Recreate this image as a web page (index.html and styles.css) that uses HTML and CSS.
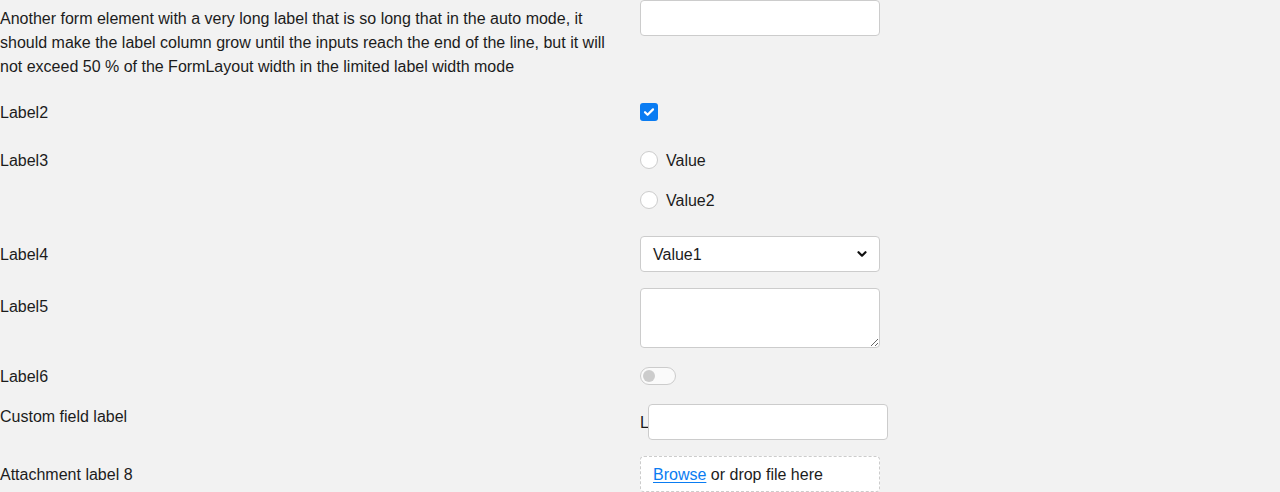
FILE: index.html
```html
<!DOCTYPE html>
<html>
<head>
<meta charset="utf-8">
<link rel="stylesheet" href="styles.css">
</head>
<body>
<div class="form">
  <div class="row r1">
    <div class="lbl">Another form element with a very long label that is so long that in the auto mode, it should make the label column grow until the inputs reach the end of the line, but it will not exceed 50 % of the FormLayout width in the limited label width mode</div>
    <div class="ctl"><div class="input"></div></div>
  </div>
  <div class="row r2">
    <div class="lbl">Label2</div>
    <div class="ctl"><div class="check"><svg width="18" height="18" viewBox="0 0 18 18"><path d="M5 9.2l2.6 2.6L13 6.4" fill="none" stroke="#fff" stroke-width="2.2" stroke-linecap="round" stroke-linejoin="round"/></svg></div></div>
  </div>
  <div class="row r3">
    <div class="lbl">Label3</div>
    <div class="ctl radios">
      <div class="radio"><span class="dot"></span><span class="txt">Value</span></div>
      <div class="radio"><span class="dot"></span><span class="txt">Value2</span></div>
    </div>
  </div>
  <div class="row r4">
    <div class="lbl">Label4</div>
    <div class="ctl"><div class="select"><span class="txt">Value1</span><svg width="12" height="12" viewBox="0 0 12 12"><path d="M2.5 4.2L6 7.7l3.5-3.5" fill="none" stroke="#111" stroke-width="2.2" stroke-linecap="round" stroke-linejoin="round"/></svg></div></div>
  </div>
  <div class="row r5">
    <div class="lbl">Label5</div>
    <div class="ctl"><textarea class="area"></textarea></div>
  </div>
  <div class="row r6">
    <div class="lbl">Label6</div>
    <div class="ctl"><div class="toggle"><span class="knob"></span></div></div>
  </div>
  <div class="row r7">
    <div class="lbl top">Custom field label</div>
    <div class="ctl custom"><span class="prefix txt">L</span><div class="input"></div></div>
  </div>
  <div class="row r8">
    <div class="lbl">Attachment label 8</div>
    <div class="ctl"><div class="upload"><span class="txt"><a class="browse">Browse</a> or drop file here</span></div></div>
  </div>
</div>
</body>
</html>
```
FILE: styles.css
```css
* { box-sizing: border-box; }
html, body { margin: 0; padding: 0; }
body {
  background: #f2f2f2;
  font-family: "Liberation Sans", Arial, sans-serif;
  font-size: 16px;
  line-height: 24px;
  color: #1c1c1c;
  width: 1280px;
  height: 492px;
  overflow: hidden;
}
.form { display: flex; flex-direction: column; }
.row {
  display: grid;
  grid-template-columns: 640px 1fr;
  align-items: start;
}
.r2 { margin-top: 15px; }
.r3 { margin-top: 17px; }
.r4 { margin-top: 24px; }
.r5 { margin-top: 16px; }
.r6 { margin-top: 10px; }
.r7 { margin-top: 15px; }
.r8 { margin-top: 16px; }
.lbl { padding: 7px 20px 0 0; }
.lbl.top { padding-top: 1px; }
.txt { padding-top: 2px; }
.ctl { display: flex; flex-direction: column; align-items: flex-start; }
.input {
  width: 240px;
  height: 36px;
  background: #fff;
  border: 1px solid #cccccc;
  border-radius: 4px;
}
.check {
  margin-top: 9px;
  width: 18px;
  height: 18px;
  border-radius: 3px;
  background: #0a7cf2;
}
.check svg { display: block; }
.radios { padding-top: 6px; gap: 16px; }
.radio { display: flex; align-items: center; gap: 8px; height: 24px; }
.dot {
  width: 18px;
  height: 18px;
  border-radius: 50%;
  background: #fff;
  border: 1px solid #cccccc;
}
.select {
  width: 240px;
  height: 36px;
  background: #fff;
  border: 1px solid #cccccc;
  border-radius: 4px;
  display: flex;
  align-items: center;
  justify-content: space-between;
  padding: 0 11px 0 12px;
}
.select svg { display: block; }
.area {
  display: block;
  width: 240px;
  height: 60px;
  margin: 0;
  background: #fff;
  border: 1px solid #cccccc;
  border-radius: 4px;
  resize: both;
  font: inherit;
}
.toggle {
  margin-top: 9px;
  width: 36px;
  height: 18px;
  border: 1px solid #cccccc;
  border-radius: 9px;
  background: #fafafa;
  display: flex;
  align-items: center;
  padding-left: 2px;
}
.knob {
  width: 12px;
  height: 12px;
  border-radius: 50%;
  background: #cccccc;
}
.custom { flex-direction: row; align-items: center; }
.prefix { width: 8px; }
.upload {
  width: 240px;
  height: 36px;
  background: #fff;
  border: 1px dashed #cccccc;
  border-radius: 4px;
  display: flex;
  align-items: center;
  padding: 0 12px;
  white-space: pre;
}
.browse { color: #0a7cf2; text-decoration: underline; text-decoration-thickness: 1px; text-underline-offset: 2px; }
```
